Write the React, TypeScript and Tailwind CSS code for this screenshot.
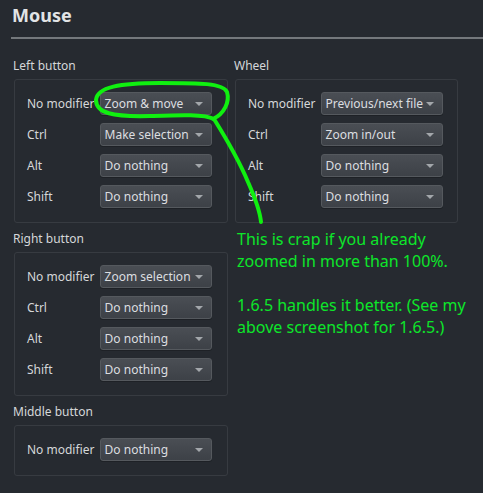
import React from 'react';

type Row = { label: string; value: string };

const font = { fontFamily: '"Noto Sans", "Open Sans", sans-serif' };

const Combo: React.FC<{ value: string; width: string }> = ({ value, width }) => (
  <div
    className={`${width} h-[23px] flex items-center justify-between pl-[4px] pr-[8px] rounded-[3px] border border-[#55595e] bg-gradient-to-b from-[#4a4e54] to-[#3d4147] text-[#dcdee0] text-[12px] shadow-[0_1px_0_#1e2126]`}
  >
    <span className="whitespace-nowrap">{value}</span>
    <span className="w-0 h-0 border-l-[4px] border-r-[4px] border-t-[4px] border-l-transparent border-r-transparent border-t-[#a3a7ab]" />
  </div>
);

const Group: React.FC<{ title: string; rows: Row[]; boxWidth: string; comboWidth: string; pl: string; pr: string }> = ({
  title,
  rows,
  boxWidth,
  comboWidth,
  pl,
  pr,
}) => (
  <div className="flex flex-col">
    <div className="h-[16px] leading-[16px] text-[12px] text-[#d5d7d9] -ml-[1px]">{title}</div>
    <div className={`${boxWidth} mt-[5px] ${pl} ${pr} pt-[12px] pb-[14px] border border-[#373b41] rounded-[3px] flex flex-col gap-[8px]`}>
      {rows.map((r) => (
        <div key={r.label} className="flex items-center">
          <div className="w-[73px] text-[12px] text-[#d5d7d9] whitespace-nowrap">{r.label}</div>
          <Combo value={r.value} width={comboWidth} />
        </div>
      ))}
    </div>
  </div>
);

export default function App() {
  return (
    <div className="relative w-[483px] h-[493px] overflow-hidden bg-[#262a30]" style={font}>
      <div className="pl-[12px] pt-[2px] h-[37px] text-[18px] font-bold text-[#e2e4e6]">Mouse</div>
      <div className="ml-[11px] h-[2px] bg-[#74787c]" />

      <div className="flex pl-[14px] pt-[19px] gap-[7px]">
        <div className="flex flex-col gap-[8px]">
          <Group
            title="Left button"
            boxWidth="w-[214px]"
            comboWidth="w-[113px]"
            pl="pl-[12px]"
            pr="pr-[15px]"
            rows={[
              { label: 'No modifier', value: 'Zoom & move' },
              { label: 'Ctrl', value: 'Make selection' },
              { label: 'Alt', value: 'Do nothing' },
              { label: 'Shift', value: 'Do nothing' },
            ]}
          />
          <Group
            title="Right button"
            boxWidth="w-[214px]"
            comboWidth="w-[113px]"
            pl="pl-[12px]"
            pr="pr-[15px]"
            rows={[
              { label: 'No modifier', value: 'Zoom selection' },
              { label: 'Ctrl', value: 'Do nothing' },
              { label: 'Alt', value: 'Do nothing' },
              { label: 'Shift', value: 'Do nothing' },
            ]}
          />
          <Group
            title="Middle button"
            boxWidth="w-[214px]"
            comboWidth="w-[113px]"
            pl="pl-[12px]"
            pr="pr-[15px]"
            rows={[{ label: 'No modifier', value: 'Do nothing' }]}
          />
        </div>

        <div className="flex flex-col">
          <Group
            title="Wheel"
            boxWidth="w-[223px]"
            comboWidth="w-[123px]"
            pl="pl-[12px]"
            pr="pr-[14px]"
            rows={[
              { label: 'No modifier', value: 'Previous/next file' },
              { label: 'Ctrl', value: 'Zoom in/out' },
              { label: 'Alt', value: 'Do nothing' },
              { label: 'Shift', value: 'Do nothing' },
            ]}
          />
          <div className="mt-[5px] pl-[2px] text-[16px] leading-[22px] text-[#0de62a]">
            <p>This is crap if you already</p>
            <p>zoomed in more than 100%.</p>
            <p className="h-[22px]" />
            <p>1.6.5 handles it better. (See my</p>
            <p>above screenshot for 1.6.5.)</p>
          </div>
        </div>
      </div>

      {/* hand-drawn annotation */}
      <svg className="absolute left-0 top-0 pointer-events-none" width="483" height="493">
        <path
          d="M 213 119 C 224 114 230 102 227 92 C 223 83 200 83 160 83 C 120 83 97 87 96 100 C 96 113 112 117 150 116 C 180 115 204 114 214 119 C 224 135 238 158 248 182 C 256 200 260 212 261 222"
          fill="none"
          stroke="#10f010"
          strokeWidth="4"
          strokeLinecap="round"
          strokeLinejoin="round"
        />
      </svg>
    </div>
  );
}
